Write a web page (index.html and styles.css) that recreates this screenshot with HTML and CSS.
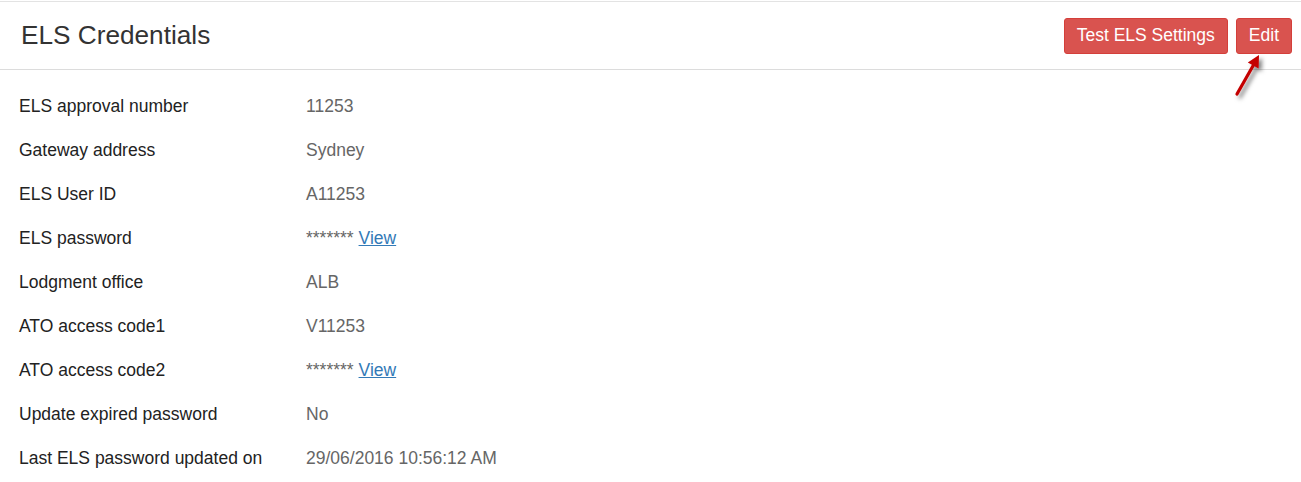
FILE: index.html
```html
<!DOCTYPE html>
<html lang="en">
  <head>
    <meta charset="UTF-8" />
    <title>ELS Credentials</title>
    <link rel="stylesheet" href="styles.css">
  </head>
  <body>
    <div class="panel">
      <div class="panel-heading">
        <h3 class="panel-title">ELS Credentials</h3>
        <div class="actions">
          <button class="btn btn-danger">Test ELS Settings</button>
          <button class="btn btn-danger">Edit</button>
          <!-- callout arrow pointing at Edit -->
          <svg class="callout" width="40" height="60" viewBox="0 0 40 60">
            <defs>
              <filter id="shadow" x="-50%" y="-50%" width="200%" height="200%">
                <feDropShadow dx="3" dy="3" stdDeviation="2" flood-color="#000" flood-opacity="0.5"/>
              </filter>
            </defs>
            <g filter="url(#shadow)">
              <line x1="7" y1="44" x2="23.5" y2="15" stroke="#c40000" stroke-width="3.2" stroke-linecap="round"/>
              <polygon points="29,5 28.6,18.6 17.8,12.4" fill="#c40000"/>
            </g>
          </svg>
        </div>
      </div>
      <div class="panel-body">
        <div class="row"><div class="label">ELS approval number</div><div class="value">11253</div></div>
        <div class="row"><div class="label">Gateway address</div><div class="value">Sydney</div></div>
        <div class="row"><div class="label">ELS User ID</div><div class="value">A11253</div></div>
        <div class="row"><div class="label">ELS password</div><div class="value">******* <a href="#">View</a></div></div>
        <div class="row"><div class="label">Lodgment office</div><div class="value">ALB</div></div>
        <div class="row"><div class="label">ATO access code1</div><div class="value">V11253</div></div>
        <div class="row"><div class="label">ATO access code2</div><div class="value">******* <a href="#">View</a></div></div>
        <div class="row"><div class="label">Update expired password</div><div class="value">No</div></div>
        <div class="row"><div class="label">Last ELS password updated on</div><div class="value">29/06/2016 10:56:12 AM</div></div>
      </div>
    </div>
  </body>
</html>
```

FILE: styles.css
```css
html, body {
  margin: 0;
  background: #fff;
  font-family: "Liberation Sans", Arial, sans-serif;
}

body {
  padding-top: 1px;
}

.panel {
  border-top: 1px solid #e3e3e3;
}

.panel-heading {
  display: flex;
  align-items: center;
  justify-content: space-between;
  height: 67px;
  padding: 0 9px 0 21px;
  border-bottom: 1px solid #dcdcdc;
}

.panel-title {
  margin: 0;
  font-size: 26.2px;
  font-weight: normal;
  color: #333;
}

.actions {
  position: relative;
  display: flex;
  gap: 8px;
}

.btn {
  height: 36px;
  padding: 0 12px;
  border: 1px solid #d43f3a;
  border-radius: 3px;
  font-family: inherit;
  font-size: 17.5px;
  color: #fff;
  cursor: pointer;
}

.btn-danger {
  background: #d9534f;
}

.callout {
  position: absolute;
  top: 32px;
  right: 22px;
  overflow: visible;
}

.panel-body {
  padding: 15px 19px 0;
}

.row {
  display: flex;
  height: 43.9px;
  align-items: center;
  font-size: 17.5px;
}

.label {
  width: 287px;
  color: #222;
}

.value {
  color: #666;
}

.value a {
  color: #337ab7;
  text-decoration: underline;
}
```
